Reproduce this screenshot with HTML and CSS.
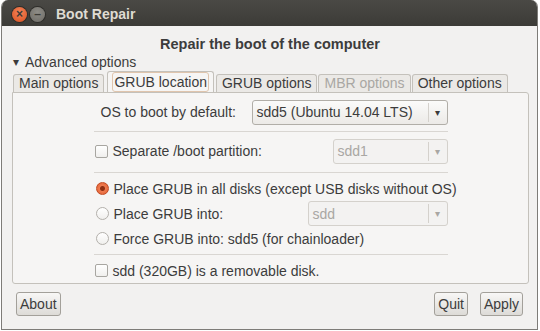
FILE: index.html
```html
<html>

<head>
    <meta http-equiv="Content-Type" content="text/html; charset=utf-8">
    <title>Boot Repair</title>

    <link rel="stylesheet" href="styles.css">
</head>

<body>
    <div class="window">
        <div class="titlebar">
            <span class="wbtn close">&times;</span>
            <span class="wbtn mini">&ndash;</span>
            <span class="wtitle">Boot Repair</span>
        </div>

        <div class="content">
            <h1>Repair the boot of the computer</h1>
            <div class="expander"><span class="arrow">&#9662;</span>Advanced options</div>

            <div class="tabs">
                <div class="tab">Main options</div>
                <div class="tab active"><span class="focus">GRUB location</span></div>
                <div class="tab">GRUB options</div>
                <div class="tab disabled">MBR options</div>
                <div class="tab">Other options</div>
            </div>

            <div class="panel">
                <div class="column">
                    <div class="row">
                        <span class="label first">OS to boot by default:</span>
                        <div class="combo wide"><span class="value">sdd5 (Ubuntu 14.04 LTS)</span><span class="drop">&#9662;</span></div>
                    </div>
                    <div class="sep"></div>
                    <div class="row">
                        <span class="check"></span>
                        <span class="label">Separate /boot partition:</span>
                        <div class="combo off small"><span class="value">sdd1</span><span class="drop">&#9662;</span></div>
                    </div>
                    <div class="sep before-radios"></div>
                    <div class="row short">
                        <span class="radio on"></span>
                        <span class="label">Place GRUB in all disks (except USB disks without OS)</span>
                    </div>
                    <div class="row short">
                        <span class="radio"></span>
                        <span class="label">Place GRUB into:</span>
                        <div class="combo off mid"><span class="value">sdd</span><span class="drop">&#9662;</span></div>
                    </div>
                    <div class="row short">
                        <span class="radio"></span>
                        <span class="label">Force GRUB into: sdd5 (for chainloader)</span>
                    </div>
                    <div class="sep after-radios"></div>
                    <div class="row short">
                        <span class="check"></span>
                        <span class="label">sdd (320GB) is a removable disk.</span>
                    </div>
                </div>
            </div>

            <div class="buttons">
                <button>About</button>
                <span class="spacer"></span>
                <button>Quit</button>
                <button>Apply</button>
            </div>
        </div>
    </div>
</body>

</html>
```

FILE: styles.css
```css
body {
    margin: 0;
    background: #ffffff;
    font-family: "Liberation Sans", "DejaVu Sans", sans-serif;
    font-size: 14px;
    color: #3c3c3c;
}

.window {
    margin-left: 1px;
    width: 537px;
    height: 330px;
    box-sizing: border-box;
    border: 1px solid #7e7c78;
    border-top: none;
    border-radius: 7px 7px 0 0;
    background: #f2f1f0;
    overflow: hidden;
}

.titlebar {
    height: 26px;
    background: linear-gradient(#4a4945, #3c3b37);
    display: flex;
    align-items: center;
    padding-left: 10px;
    padding-top: 2px;
    box-sizing: border-box;
}

.wbtn {
    width: 15px;
    height: 15px;
    border-radius: 50%;
    display: flex;
    justify-content: center;
    align-items: center;
    font-size: 12px;
    line-height: 1;
    color: #3c3b37;
    font-weight: bold;
    margin-right: 3px;
}

.close {
    background: radial-gradient(circle at 50% 35%, #f4845a, #d9501f);
    box-shadow: 0 0 0 1px #2e2d2a;
}

.mini {
    background: radial-gradient(circle at 50% 35%, #8e8c86, #6d6b66);
    box-shadow: 0 0 0 1px #2e2d2a;
}

.wtitle {
    margin-left: 8px;
    color: #dfdbd2;
    font-weight: bold;
    font-size: 14px;
}

.content {
    padding: 10px 9px 0 10px;
}

h1 {
    margin: 0;
    font-size: 14.5px;
    font-weight: bold;
    text-align: center;
    line-height: 17px;
    color: #3c3c3c;
}

.expander {
    margin-top: 1px;
    line-height: 16px;
    display: flex;
    align-items: center;
}

.arrow {
    font-size: 12px;
    width: 12px;
    padding-left: 1px;
}

.tabs {
    display: flex;
    align-items: flex-end;
    margin-top: 2px;
    padding-left: 1px;
    height: 20px;
}

.tab {
    height: 17px;
    line-height: 17px;
    padding: 0 5px;
    border: 1px solid #c4c1bb;
    border-bottom: none;
    border-radius: 3px 3px 0 0;
    background: #ebe9e6;
    margin-right: 1px;
}

.tab.active {
    height: 20px;
    line-height: 20px;
    background: #f6f5f4;
    padding: 0 4px;
    margin: 0 2px;
}

.focus {
    border: 1px solid #e0c5ad;
    border-radius: 3px;
    padding: 1px 1px;
}

.tab.disabled {
    color: #a9a7a3;
}

.panel {
    border: 1px solid #c4c1bb;
    border-radius: 0 3px 3px 3px;
    background: #f6f5f4;
    width: 517px;
    box-sizing: border-box;
    padding: 6px 0 0;
}

.column {
    width: 354px;
    margin: 0 auto;
}

.row {
    display: flex;
    align-items: center;
    height: 26px;
}

.row.short {
    height: 25px;
}

.label {
    white-space: nowrap;
}

.label.first {
    padding-left: 7px;
}

.sep {
    height: 1px;
    background: #d9d6d2;
    margin: 6px 0;
}

.sep.before-radios {
    margin: 8px 0 3px;
}

.sep.after-radios {
    margin: 3px 0;
}

.check {
    flex-shrink: 0;
    width: 11px;
    height: 11px;
    border: 1px solid #a8a6a1;
    border-radius: 2px;
    background: linear-gradient(#ffffff, #f0efed);
    margin: 0 5px 0 1px;
}

.radio {
    flex-shrink: 0;
    width: 11px;
    height: 11px;
    border: 1px solid #b3b0ab;
    border-radius: 50%;
    background: linear-gradient(#ffffff, #f0efed);
    margin: 0 5px 0 2px;
}

.radio.on {
    background: radial-gradient(circle, #8f2f12 0 2px, #ef7a4f 3px, #e05e30);
    border-color: #c24a22;
}

.combo {
    flex-shrink: 0;
    margin-left: auto;
    height: 25px;
    box-sizing: border-box;
    border: 1px solid #b1aea8;
    border-radius: 3px;
    background: linear-gradient(#fbfbfa, #eceae7);
    display: flex;
    align-items: center;
}

.combo .value {
    flex: 1;
    padding-left: 4px;
}

.combo .drop {
    width: 18px;
    border-left: 1px solid #d4d1cc;
    text-align: center;
    font-size: 10px;
    line-height: 19px;
    color: #3c3c3c;
}

.combo.wide {
    width: 196px;
}

.combo.small {
    width: 115px;
}

.combo.mid {
    width: 140px;
}

.combo.off {
    background: #f3f2f1;
    border-color: #d4d1cc;
    color: #a9a7a3;
}

.combo.off .drop {
    color: #a9a7a3;
}

.buttons {
    display: flex;
    margin-top: 8px;
    padding: 0 5px 0 4px;
}

.spacer {
    flex: 1;
}

button {
    height: 24px;
    padding: 0 3px;
    margin-left: 12px;
    font-family: "Liberation Sans", "DejaVu Sans", sans-serif;
    font-size: 14px;
    color: #3c3c3c;
    border: 1px solid #a3a09a;
    border-radius: 3px;
    background: linear-gradient(#f8f7f6, #dddbd7);
}

button:first-child {
    margin-left: 0;
}
```
